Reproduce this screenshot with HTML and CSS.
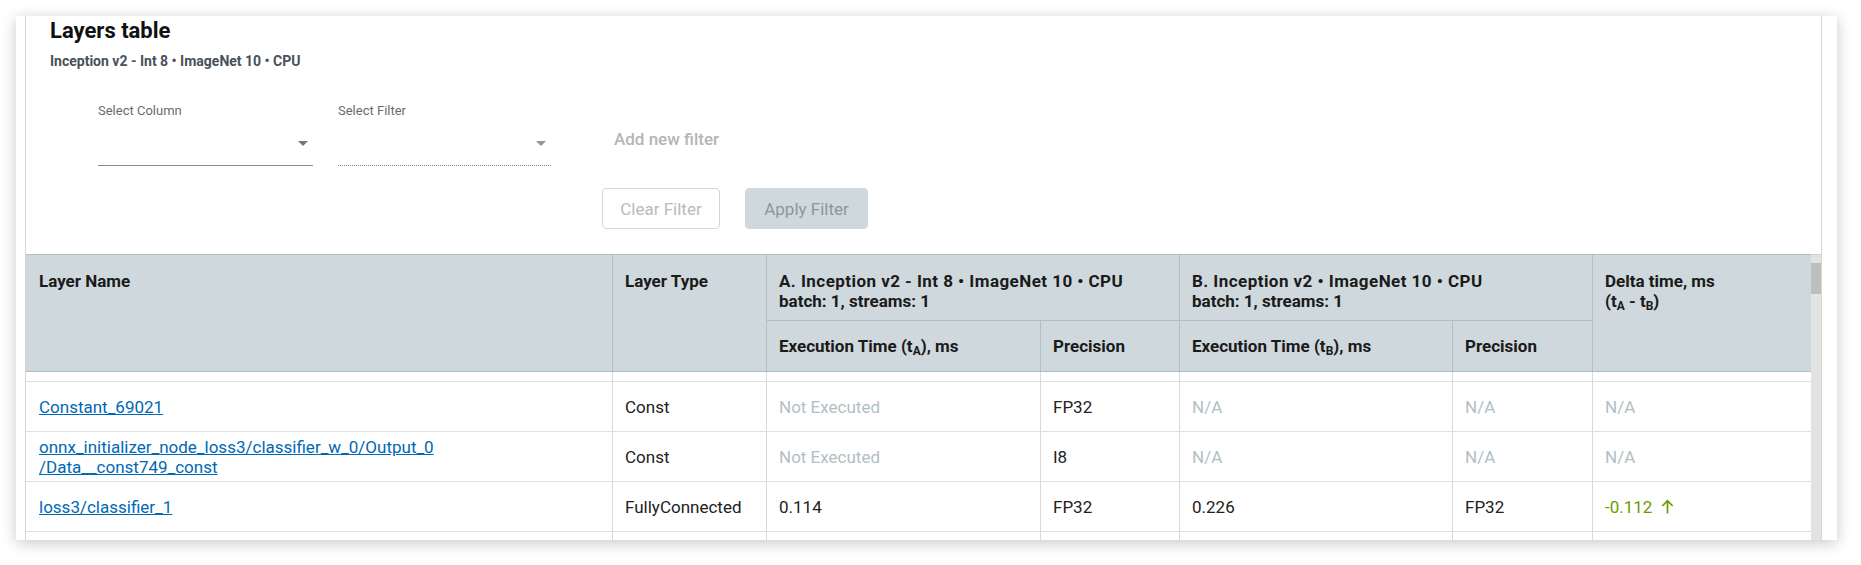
FILE: index.html
```html
<!DOCTYPE html>
<html>
<head>
<meta charset="utf-8">
<title>Layers table</title>
<link rel="stylesheet" href="styles.css">
</head>
<body>
<div class="page">
  <div class="card">
    <div class="panel">
      <h1 class="title">Layers table</h1>
      <div class="subtitle">Inception v2 - Int 8 • ImageNet 10 • CPU</div>

      <div class="filters">
        <div class="field">
          <span class="field-label">Select Column</span>
          <div class="select"><span class="caret"></span></div>
        </div>
        <div class="field">
          <span class="field-label">Select Filter</span>
          <div class="select select-disabled"><span class="caret caret-disabled"></span></div>
        </div>
        <button class="add-filter" type="button">Add new filter</button>
        <div class="actions">
          <button class="btn btn-outline" type="button">Clear Filter</button>
          <button class="btn btn-filled" type="button">Apply Filter</button>
        </div>
      </div>

      <div class="table-area">
        <div class="table-wrap">
          <div class="thead">
            <div class="th first span-rows">Layer Name</div>
            <div class="th span-rows">Layer Type</div>
            <div class="th span-cols"><span class="run-name">A. Inception v2 - Int 8 • ImageNet 10 • CPU</span><br>batch: 1, streams: 1</div>
            <div class="th span-cols"><span class="run-name">B. Inception v2 • ImageNet 10 • CPU</span><br>batch: 1, streams: 1</div>
            <div class="th span-rows">Delta time, ms<br>(t<span class="sub">A</span> - t<span class="sub">B</span>)</div>
            <div class="th th-sub"><span>Execution Time (t<span class="sub">A</span>), ms</span></div>
            <div class="th th-sub"><span>Precision</span></div>
            <div class="th th-sub"><span>Execution Time (t<span class="sub">B</span>), ms</span></div>
            <div class="th th-sub"><span>Precision</span></div>
          </div>
          <div class="tbody-clip">
            <div class="tbody">
              <div class="td first"><a class="link" href="#">Constant_69020</a></div>
              <div class="td">Const</div>
              <div class="td muted">Not Executed</div>
              <div class="td">FP32</div>
              <div class="td muted">N/A</div>
              <div class="td muted">N/A</div>
              <div class="td muted">N/A</div>

              <div class="td first"><a class="link" href="#">Constant_69021</a></div>
              <div class="td">Const</div>
              <div class="td muted">Not Executed</div>
              <div class="td">FP32</div>
              <div class="td muted">N/A</div>
              <div class="td muted">N/A</div>
              <div class="td muted">N/A</div>

              <div class="td first"><a class="link" href="#">onnx_initializer_node_loss3/classifier_w_0/Output_0<br>/Data__const749_const</a></div>
              <div class="td">Const</div>
              <div class="td muted">Not Executed</div>
              <div class="td">I8</div>
              <div class="td muted">N/A</div>
              <div class="td muted">N/A</div>
              <div class="td muted">N/A</div>

              <div class="td first"><a class="link" href="#">loss3/classifier_1</a></div>
              <div class="td">FullyConnected</div>
              <div class="td">0.114</div>
              <div class="td">FP32</div>
              <div class="td">0.226</div>
              <div class="td">FP32</div>
              <div class="td"><span class="delta-good"><span>-0.112</span><svg class="arrow-up" width="13" height="15" viewBox="0 0 13 15" aria-hidden="true"><path d="M6.5 14.5V1.8M1.3 7L6.5 1.8 11.7 7" fill="none" stroke="currentColor" stroke-width="1.7"/></svg></span></div>

              <div class="td first"><a class="link" href="#">prob</a></div>
              <div class="td">SoftMax</div>
              <div class="td">0.006</div>
              <div class="td">FP32</div>
              <div class="td">0.005</div>
              <div class="td">FP32</div>
              <div class="td">0.001</div>
            </div>
          </div>
        </div>
        <div class="scrollbar"><div class="thumb"></div></div>
      </div>
    </div>
  </div>
</div>
</body>
</html>
```
FILE: styles.css
```css
* { box-sizing: border-box; }

html, body {
  margin: 0;
  padding: 0;
  background: #ffffff;
}

body {
  font-family: Roboto, "Liberation Sans", Arial, sans-serif;
  color: #212121;
}

.page {
  padding: 16px 24px 0 16px;
  height: 565px;
}

.card {
  width: 1821px;
  height: 524px;
  background: #ffffff;
  box-shadow: 0 3px 14px rgba(0, 0, 0, 0.22);
  overflow: hidden;
  padding: 0 15px 0 9px;
}

.panel {
  height: 100%;
  border-left: 1px solid #d6d6d6;
  border-right: 1px solid #d6d6d6;
  padding-top: 3px;
  display: flex;
  flex-direction: column;
}

.title {
  margin: 0 0 0 24px;
  font-size: 22px;
  line-height: 24px;
  font-weight: 700;
  color: #111111;
}

.subtitle {
  margin: 8px 0 0 24px;
  font-size: 14px;
  line-height: 20px;
  font-weight: 700;
  color: #48515a;
}

/* Filters */
.filters {
  margin: 32px 0 0 72px;
  display: grid;
  grid-template-columns: 215px 213px auto;
  column-gap: 25px;
  row-gap: 22px;
}

.field-label {
  display: block;
  font-size: 13px;
  line-height: 16px;
  color: #6b6b6b;
}

.select {
  height: 47px;
  border-bottom: 1px solid #8c8c8c;
  display: flex;
  justify-content: flex-end;
  align-items: center;
  padding: 2px 5px 0 0;
}

.select-disabled {
  border-bottom: 1px dotted #858585;
}

.caret {
  width: 0;
  height: 0;
  border-left: 5px solid transparent;
  border-right: 5px solid transparent;
  border-top: 5px solid #777777;
}

.caret-disabled {
  border-top-color: #959595;
}

.add-filter {
  align-self: end;
  justify-self: start;
  margin: 0 0 9px 26px;
  height: 36px;
  padding: 0 12px;
  border: none;
  background: none;
  font-family: inherit;
  font-size: 17px;
  font-weight: 500;
  line-height: 36px;
  color: #b5b5b5;
}

.actions {
  grid-column: 3;
  margin-left: 26px;
  display: flex;
  gap: 25px;
}

.btn {
  height: 41px;
  border-radius: 4px;
  font-family: inherit;
  font-size: 17px;
  font-weight: 400;
  padding: 0;
  text-align: center;
}

.btn-outline {
  width: 118px;
  background: #ffffff;
  border: 1px solid #cfd8dc;
  color: #b4bcc0;
}

.btn-filled {
  width: 123px;
  background: #cfd8dc;
  border: 1px solid #cfd8dc;
  color: #8e979b;
}

/* Table */
.table-area {
  margin-top: 25px;
  flex: 1;
  min-height: 0;
  display: flex;
}

.table-wrap {
  width: 1785px;
  display: flex;
  flex-direction: column;
  overflow: hidden;
}

.thead,
.tbody {
  display: grid;
  grid-template-columns: 586px 154px 274px 139px 273px 140px 219px;
}

.thead {
  grid-template-rows: 66px 51px;
  background: #cfd8dc;
  border-top: 1px solid #b0bec5;
}

.th {
  border-left: 1px solid #b0bec5;
  border-bottom: 1px solid #b0bec5;
  padding: 16px 12px 0;
  font-size: 17px;
  line-height: 20px;
  font-weight: 700;
  color: #1a1a1a;
}

.run-name {
  letter-spacing: 0.45px;
}

.th.first,
.td.first {
  border-left: 0;
  padding-left: 13px;
}

.span-rows { grid-row: span 2; }
.span-cols { grid-column: span 2; }

.th-sub {
  padding-top: 0;
  display: flex;
  align-items: center;
}

.sub {
  font-size: 12px;
  vertical-align: -3px;
  line-height: 0;
}

.tbody-clip {
  flex: 1;
  min-height: 0;
  overflow: hidden;
}

.tbody {
  grid-auto-rows: 50px;
  margin-top: -40px;
}

.td {
  border-left: 1px solid #d3dbdf;
  border-bottom: 1px solid #e0e0e0;
  padding: 0 12px;
  display: flex;
  align-items: center;
  font-size: 17px;
  line-height: 20px;
  color: #212121;
}

.link {
  color: #0068b5;
  text-decoration: underline;
}

.muted {
  color: #b3bec4;
}

.delta-good {
  color: #6c9d00;
  display: inline-flex;
  align-items: center;
  gap: 9px;
}

.arrow-up {
  display: block;
}

.scrollbar {
  width: 10px;
  background: #e3e3e3;
  border-top: 1px solid #c9d2d6;
}

.thumb {
  margin-top: 8px;
  height: 31px;
  background: #bebebe;
}
```
